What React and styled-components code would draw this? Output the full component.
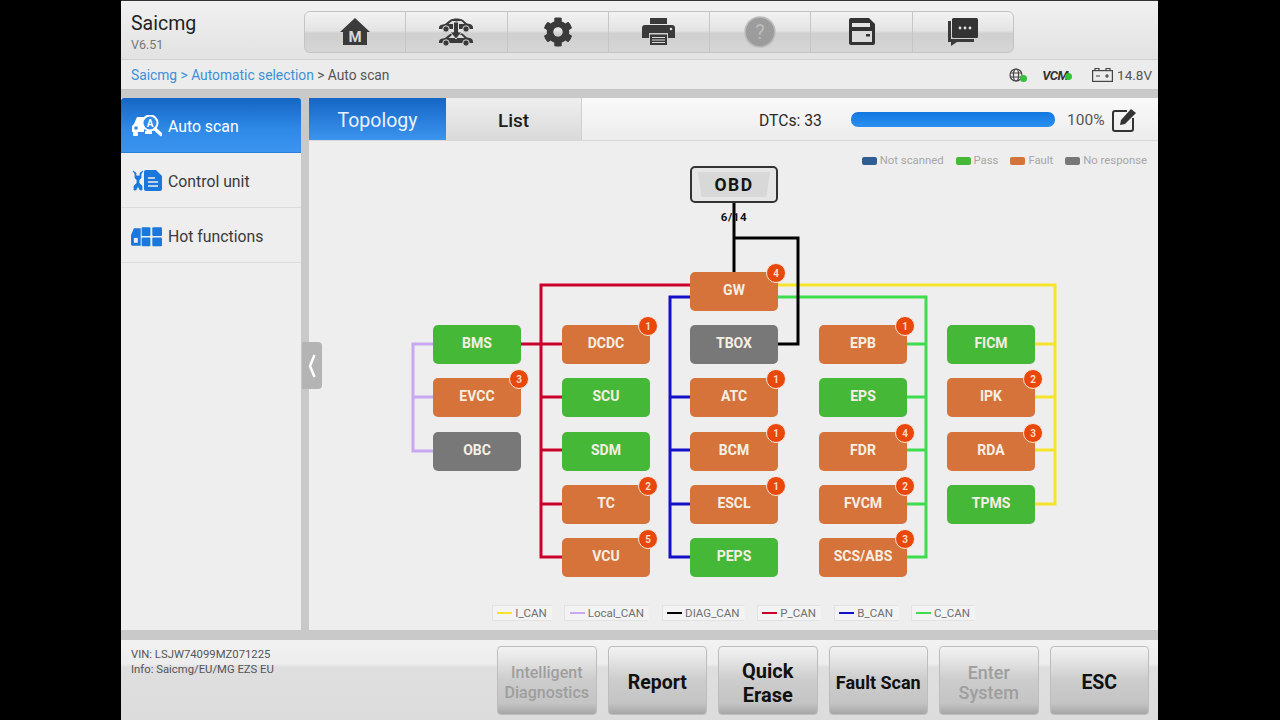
import React from 'react'
import styled, { createGlobalStyle } from 'styled-components'
import { FaCog } from 'react-icons/fa'

const GlobalStyle = createGlobalStyle`
  html, body {
    margin: 0;
    height: 100%;
    background: #000;
    font-family: Roboto, "Liberation Sans", sans-serif;
  }
`

// diagram origin in page coordinates, the data below is read off the screen
const OX = 309
const OY = 166

const nodes = [
  { name: 'GW', x: 690, y: 272, kind: 'fault', count: 4 },
  { name: 'BMS', x: 433, y: 325, kind: 'pass' },
  { name: 'EVCC', x: 433, y: 378, kind: 'fault', count: 3 },
  { name: 'OBC', x: 433, y: 432, kind: 'none' },
  { name: 'DCDC', x: 562, y: 325, kind: 'fault', count: 1 },
  { name: 'SCU', x: 562, y: 378, kind: 'pass' },
  { name: 'SDM', x: 562, y: 432, kind: 'pass' },
  { name: 'TC', x: 562, y: 485, kind: 'fault', count: 2 },
  { name: 'VCU', x: 562, y: 538, kind: 'fault', count: 5 },
  { name: 'TBOX', x: 690, y: 325, kind: 'none' },
  { name: 'ATC', x: 690, y: 378, kind: 'fault', count: 1 },
  { name: 'BCM', x: 690, y: 432, kind: 'fault', count: 1 },
  { name: 'ESCL', x: 690, y: 485, kind: 'fault', count: 1 },
  { name: 'PEPS', x: 690, y: 538, kind: 'pass' },
  { name: 'EPB', x: 819, y: 325, kind: 'fault', count: 1 },
  { name: 'EPS', x: 819, y: 378, kind: 'pass' },
  { name: 'FDR', x: 819, y: 432, kind: 'fault', count: 4 },
  { name: 'FVCM', x: 819, y: 485, kind: 'fault', count: 2 },
  { name: 'SCS/ABS', x: 819, y: 538, kind: 'fault', count: 3 },
  { name: 'FICM', x: 947, y: 325, kind: 'pass' },
  { name: 'IPK', x: 947, y: 378, kind: 'fault', count: 2 },
  { name: 'RDA', x: 947, y: 432, kind: 'fault', count: 3 },
  { name: 'TPMS', x: 947, y: 485, kind: 'pass' },
]

const kindColors = { fault: '#d5733a', pass: '#46b838', none: '#787878' }

const wires = [
  { color: '#c8a8f0', d: 'M433 344H413V451H433M413 397H433' },
  { color: '#c9002b', d: 'M690 285H541V557H562M521 344H562M541 397H562M541 450H562M541 504H562' },
  { color: '#1410c8', d: 'M690 297H670V557H690M670 397H690M670 450H690M670 504H690' },
  { color: '#f5e42a', d: 'M778 285H1055V504H1035M1035 344H1055M1035 397H1055M1035 450H1055' },
  { color: '#3fdc4e', d: 'M778 297H926V557H907M907 344H926M907 397H926M907 450H926M907 504H926' },
  { color: '#000', d: 'M734 203V272M734 238H798V344H778' },
]

const busLegend = [
  { name: 'I_CAN', color: '#f5e42a', w: 60 },
  { name: 'Local_CAN', color: '#c8a8f0', w: 85 },
  { name: 'DIAG_CAN', color: '#000', w: 83 },
  { name: 'P_CAN', color: '#c9002b', w: 64 },
  { name: 'B_CAN', color: '#1410c8', w: 65 },
  { name: 'C_CAN', color: '#3fdc4e', w: 64 },
]

const Screen = styled.div`
  width: 1037px;
  height: 720px;
  margin-left: 121px;
  display: flex;
  flex-direction: column;
  background: #c9c9c9;
  border-top: 1px solid #333;
  box-sizing: border-box;
  overflow: hidden;
`

const TopBar = styled.header`
  height: 59px;
  flex: none;
  display: flex;
  align-items: center;
  padding-left: 10px;
  background: linear-gradient(#f1f1f1, #e2e2e2);
  border-bottom: 1px solid #cfcfcf;
  box-sizing: border-box;
`

const Brand = styled.div`
  width: 173px;
  flex: none;
  padding-top: 4px;
  h1 {
    margin: 0;
    font-size: 19.5px;
    font-weight: 400;
    line-height: 24px;
    color: #1f1f1f;
  }
  small {
    display: block;
    margin-top: 2px;
    font-size: 12.5px;
    line-height: 14px;
    color: #777;
  }
`

const Toolbar = styled.div`
  width: 710px;
  height: 42px;
  margin-top: 3px;
  display: flex;
  border-radius: 6px;
  border: 1px solid #c4c4c4;
  box-sizing: border-box;
  overflow: hidden;
  background: linear-gradient(#f2f2f2 0%, #e4e4e4 46%, #cfcfcf 54%, #d6d6d6 100%);
`

const ToolButton = styled.div`
  flex: 1;
  display: flex;
  align-items: center;
  justify-content: center;
  color: #3a3a3a;
  font-size: 30px;
  & + & {
    border-left: 1px solid #c6c6c6;
  }
`

const CrumbBar = styled.div`
  height: 30px;
  flex: none;
  display: flex;
  align-items: center;
  padding: 1px 6px 0 10px;
  background: #ececec;
  border-bottom: 1px solid #c4c4c4;
  box-sizing: border-box;
  font-size: 13.8px;
  color: #555;
`

const Crumbs = styled.div`
  flex: 1;
  a {
    color: #3c8fd8;
  }
`

const Status = styled.div`
  display: flex;
  align-items: center;
  color: #555;
  font-size: 13.5px;
  svg {
    display: block;
  }
`

const Vcm = styled.span`
  position: relative;
  margin: 0 24px 0 18px;
  font-size: 13px;
  font-weight: 700;
  font-style: italic;
  letter-spacing: -0.5px;
  color: #333;
`

const GreenDot = styled.i`
  position: absolute;
  right: ${p => p.$right}px;
  bottom: ${p => p.$bottom}px;
  width: 7px;
  height: 7px;
  border-radius: 50%;
  background: #36c03c;
`

const Globe = styled.span`
  position: relative;
  display: block;
`

const Voltage = styled.span`
  margin-left: 4px;
`

const Body = styled.main`
  height: 532px;
  margin-top: 8px;
  flex: none;
  display: flex;
  gap: 8px;
  position: relative;
`

const Sidebar = styled.nav`
  width: 180px;
  flex: none;
  background: #eee;
  border-top-right-radius: 3px;
`

const SideItem = styled.div`
  height: 55px;
  display: flex;
  align-items: center;
  gap: 6px;
  padding: 2px 0 0 10px;
  box-sizing: border-box;
  font-size: 15.8px;
  color: ${p => (p.$active ? '#fff' : '#3a3a3a')};
  background: ${p => (p.$active ? 'linear-gradient(#1566c4, #2f8ae8 60%, #3b94ee)' : 'transparent')};
  border-bottom: 1px solid ${p => (p.$active ? '#2a7fd8' : '#dcdcdc')};
  border-radius: ${p => (p.$active ? '3px 3px 0 0' : '0')};
  svg {
    flex: none;
  }
`

const Collapse = styled.div`
  position: absolute;
  left: 181px;
  top: 244px;
  width: 20px;
  height: 47px;
  display: flex;
  align-items: center;
  justify-content: center;
  background: #b4b4b4;
  border-radius: 0 4px 4px 0;
`

const Content = styled.section`
  flex: 1;
  display: flex;
  flex-direction: column;
  background: #eee;
`

const TabBar = styled.div`
  height: 43px;
  flex: none;
  display: flex;
  align-items: center;
  background: linear-gradient(#fafafa, #ececec);
  border-bottom: 1px solid #d8d8d8;
  box-sizing: border-box;
`

const Tab = styled.div`
  width: ${p => (p.$active ? 137 : 136)}px;
  height: 100%;
  padding-top: 3px;
  display: flex;
  align-items: center;
  justify-content: center;
  font-size: ${p => (p.$active ? 19.5 : 19)}px;
  color: ${p => (p.$active ? '#e8f2ff' : '#1c1c1c')};
  font-weight: ${p => (p.$active ? 400 : 500)};
  background: ${p => (p.$active ? 'linear-gradient(#1566c4, #3b94ee)' : 'linear-gradient(#efefef, #dadada)')};
  border-right: ${p => (p.$active ? 'none' : '1px solid #d0d0d0')};
  box-sizing: border-box;
`

const Dtc = styled.div`
  margin: 2px 0 0 177px;
  width: 92px;
  font-size: 15.7px;
  color: #2a2a2a;
`

const Progress = styled.div`
  width: 204px;
  height: 15px;
  margin-top: 1px;
  border-radius: 7px;
  background: linear-gradient(#1278e0, #2a8ff0);
`

const Percent = styled.div`
  margin: 2px 0 0 12px;
  font-size: 15.5px;
  color: #555;
`

const EditIcon = styled.svg`
  margin: 1px 0 0 7px;
  display: block;
`

const Legend = styled.div`
  height: 25px;
  flex: none;
  display: flex;
  justify-content: flex-end;
  align-items: flex-end;
  gap: 12px;
  padding-right: 11px;
  font-size: 11.3px;
  line-height: 11px;
  color: #a6a6a6;
  span {
    display: flex;
    align-items: center;
    gap: 3px;
  }
`

const Swatch = styled.i`
  width: 15px;
  height: 8px;
  border-radius: 2px;
  background: ${p => p.$color};
`

const Diagram = styled.div`
  position: relative;
  height: 438px;
  flex: none;
`

const Wires = styled.svg`
  position: absolute;
  inset: 0;
  width: 100%;
  height: 100%;
`

const Node = styled.div`
  position: absolute;
  left: ${p => p.$x - OX}px;
  top: ${p => p.$y - OY}px;
  width: 88px;
  height: 38.5px;
  display: flex;
  align-items: center;
  justify-content: center;
  box-sizing: border-box;
  padding-bottom: 2px;
  border-radius: 5px;
  font-size: 14px;
  font-weight: 700;
  color: #f6efe4;
  background: ${p => kindColors[p.$kind]};
`

const Badge = styled.b`
  position: absolute;
  right: -8px;
  top: -9px;
  width: 18px;
  height: 18px;
  display: flex;
  align-items: center;
  justify-content: center;
  border-radius: 50%;
  border: 1.5px solid #f6e6da;
  background: #e8480c;
  font-size: 10px;
  font-weight: 700;
  color: #f8dcc8;
`

const Obd = styled.div`
  position: absolute;
  left: ${690 - OX}px;
  top: 0;
  width: 88px;
  height: 37px;
  padding: 4px 6px;
  display: flex;
  border: 2px solid #333;
  border-radius: 5px;
  background: #e6e6e6;
  box-sizing: border-box;
`

const ObdPlug = styled.div`
  flex: 1;
  display: flex;
  align-items: center;
  justify-content: center;
  clip-path: polygon(0 0, 100% 0, 95% 100%, 5% 100%);
  background: #d8d8d8;
  font-size: 17.5px;
  font-weight: 700;
  letter-spacing: 1.5px;
  color: #141414;
`

const Pin = styled.div`
  position: absolute;
  left: ${690 - OX}px;
  top: 44px;
  width: 88px;
  text-align: center;
  font-size: 11.5px;
  line-height: 14px;
  font-weight: 700;
  letter-spacing: 0.6px;
  color: #111;
`

const BusRow = styled.div`
  display: flex;
  justify-content: center;
  gap: 12.4px;
  margin-top: 1px;
`

const Bus = styled.div`
  width: ${p => p.$w}px;
  height: 16px;
  display: flex;
  align-items: center;
  justify-content: center;
  gap: 3px;
  font-size: 11.5px;
  color: #707070;
  background: #f3f3f3;
  border: 1px solid #e2e2e2;
  border-right-color: transparent;
  box-sizing: border-box;
`

const BusLine = styled.i`
  width: 15px;
  height: 2px;
  background: ${p => p.$color};
`

const Footer = styled.footer`
  height: 80px;
  margin-top: 10px;
  flex: none;
  display: flex;
  padding: 6px 9px 5px 10px;
  box-sizing: border-box;
  background: linear-gradient(#f2f2f2 0%, #ededed 30%, #dfdfdf 34%, #dcdcdc 100%);
`

const CarInfo = styled.div`
  flex: 1;
  padding-top: 1px;
  font-size: 11.3px;
  line-height: 15px;
  color: #555;
`

const Actions = styled.div`
  display: flex;
  gap: 11px;
`

const ActionButton = styled.button`
  width: 99.5px;
  height: 69px;
  padding: 5px 4px 0;
  border: 1px solid #bdbdbd;
  border-radius: 4px;
  font-family: inherit;
  font-size: ${p => p.$size || 18}px;
  line-height: ${p => (p.$size > 19.5 ? 24 : 20)}px;
  font-weight: ${p => (p.$off ? 500 : 700)};
  color: ${p => (p.$off ? '#9e9e9e' : '#111')};
  background: linear-gradient(#f2f2f2 0%, #e6e6e6 18%, #cdcdcd 48%, #c4c4c4 84%, #a6a6a6 100%);
`

function HomeIcon() {
  return (
    <svg width="32" height="28" viewBox="0 0 32 28">
      <path d="M16 0 L31 14 H28 V27 H4 V14 H1Z" fill="#3a3a3a" />
      <text x="16" y="24" textAnchor="middle" fontSize="15" fontWeight="700" fill="#d8d8d8" fontFamily="Roboto">M</text>
    </svg>
  )
}

function Sedan({ y }) {
  return (
    <g transform={`translate(0 ${y})`}>
      <path d="M1 11C1 8 4 7.500 7 7L12 3C15 1 22 1 25 3L29 6.500C33 7 35 8 35 11L35 12H1z" fill="#3a3a3a" />
      <path d="M10.500 7L14 4H17.500V7zM19.500 4H23.500L26.500 7H19.500z" fill="#dedede" />
      <circle cx="8" cy="12" r="3.200" fill="#3a3a3a" stroke="#dedede" />
      <circle cx="28" cy="12" r="3.200" fill="#3a3a3a" stroke="#dedede" />
    </g>
  )
}

function CarSwapIcon() {
  return (
    <svg width="36" height="30" viewBox="0 0 36 30">
      <Sedan y={0} />
      <Sedan y={14} />
      <path d="M15.500 5h5v10h3.500l-6 7-6-7h3.500z" fill="#3a3a3a" stroke="#dedede" strokeWidth="1" />
    </svg>
  )
}

function PrintIcon() {
  return (
    <svg width="33" height="27" viewBox="0 0 33 27">
      <rect x="8" y="0" width="17" height="6" fill="#3a3a3a" />
      <path d="M3 7H30a3 3 0 0 1 3 3V20H26V15H7V20H0V10a3 3 0 0 1 3-3z" fill="#3a3a3a" />
      <circle cx="29" cy="11" r="1.300" fill="#dedede" />
      <rect x="8" y="16.500" width="17" height="10.500" fill="#3a3a3a" />
      <path d="M10 19.500H23M10 22H23M10 24.500H23" stroke="#d8d8d8" strokeWidth="1" />
    </svg>
  )
}

function HelpIcon() {
  return (
    <svg width="32" height="32" viewBox="0 0 32 32">
      <circle cx="16" cy="16" r="15" fill="#9c9c9c" stroke="#bdbdbd" strokeWidth="1.500" />
      <text x="16" y="23" textAnchor="middle" fontSize="20" fill="#bcbcbc" fontFamily="Roboto">?</text>
    </svg>
  )
}

function SaveIcon() {
  return (
    <svg width="26" height="27" viewBox="0 0 26 27">
      <path d="M2 0H20L26 6V25a2 2 0 0 1-2 2H2a2 2 0 0 1-2-2V2a2 2 0 0 1 2-2z" fill="#333" />
      <rect x="3" y="5" width="18" height="4" fill="#e4e4e4" />
      <rect x="3" y="13" width="20" height="11" fill="#dcdcdc" />
      <rect x="17" y="16" width="4" height="2.500" fill="#333" />
    </svg>
  )
}

function ChatIcon() {
  return (
    <svg width="30" height="28" viewBox="0 0 30 28">
      <path d="M0 3H3V21H26V24H9L3 28V24H0z" fill="#3a3a3a" />
      <rect x="4" y="0" width="26" height="20" rx="1.500" fill="#333" />
      <circle cx="12" cy="10" r="1.400" fill="#e4e4e4" />
      <circle cx="17" cy="10" r="1.400" fill="#e4e4e4" />
      <circle cx="22" cy="10" r="1.400" fill="#e4e4e4" />
    </svg>
  )
}

function GlobeIcon() {
  return (
    <svg width="15" height="14" viewBox="0 0 15 14" fill="none" stroke="#444" strokeWidth="1.200">
      <circle cx="7" cy="7" r="6" />
      <ellipse cx="7" cy="7" rx="2.600" ry="6" />
      <path d="M1 5H13M1 9H13" />
    </svg>
  )
}

function BatteryIcon() {
  return (
    <svg width="21" height="14" viewBox="0 0 21 14" fill="none" stroke="#444" strokeWidth="1.200">
      <rect x="0.600" y="2.600" width="19.800" height="10.800" />
      <path d="M3 2.500V0.500H7V2.500M14 2.500V0.500H18V2.500M4 8H8M13 8H17M15 6V10" />
    </svg>
  )
}

function AutoScanIcon() {
  return (
    <svg width="31" height="22" viewBox="0 0 31 22">
      <path d="M1 19V11L3 9L6 2H17V8L13 11V17H1z" fill="#fff" />
      <circle cx="5" cy="13" r="1.800" fill="#2f8ae8" />
      <rect x="2" y="17" width="5" height="4" rx="1" fill="#fff" />
      <rect x="14" y="16" width="7" height="3" fill="#fff" />
      <circle cx="19" cy="8" r="7.500" fill="#2f8ae8" stroke="#fff" strokeWidth="2" />
      <text x="19" y="12" textAnchor="middle" fontSize="10" fontWeight="700" fill="#fff" fontFamily="Roboto">A</text>
      <path d="M24 14L30 19.500" stroke="#fff" strokeWidth="3.500" strokeLinecap="round" />
    </svg>
  )
}

function ControlUnitIcon() {
  return (
    <svg width="31" height="22" viewBox="0 0 31 22">
      <path d="M2 1L4 4V8L6 10V13L3 16V20H5L7 16L9 20H11V16L8 13V10L10 8V4L12 1L9 3V6H5V3z" fill="#1a78dc" stroke="#1a78dc" strokeWidth="0.800" />
      <path d="M13 2a2 2 0 0 1 2-2H25L31 6V19a2 2 0 0 1-2 2H15a2 2 0 0 1-2-2z" fill="#1a78dc" />
      <path d="M17 8H24M17 12H27M17 16H27" stroke="#eee" strokeWidth="1.600" />
    </svg>
  )
}

function HotFunctionsIcon() {
  return (
    <svg width="31" height="21" viewBox="0 0 32 21" fill="#1a78dc">
      <path d="M0 19V9L3 2H10V8H10V20H1z" />
      <rect x="3" y="12" width="4" height="5" fill="#eee" />
      <rect x="11" y="1" width="9" height="9" rx="1" />
      <rect x="22" y="1" width="10" height="9" rx="1" />
      <rect x="11" y="11.500" width="9" height="9" rx="1" />
      <rect x="22" y="11.500" width="10" height="9" rx="1" />
    </svg>
  )
}

function App() {
  return (
    <Screen>
      <GlobalStyle />
      <TopBar>
        <Brand>
          <h1>Saicmg</h1>
          <small>V6.51</small>
        </Brand>
        <Toolbar>
          <ToolButton><HomeIcon /></ToolButton>
          <ToolButton><CarSwapIcon /></ToolButton>
          <ToolButton><FaCog /></ToolButton>
          <ToolButton><PrintIcon /></ToolButton>
          <ToolButton><HelpIcon /></ToolButton>
          <ToolButton><SaveIcon /></ToolButton>
          <ToolButton><ChatIcon /></ToolButton>
        </Toolbar>
      </TopBar>

      <CrumbBar>
        <Crumbs>
          <a>Saicmg &gt; Automatic selection</a> &gt; Auto scan
        </Crumbs>
        <Status>
          <Globe>
            <GlobeIcon />
            <GreenDot $right={-3} $bottom={0} />
          </Globe>
          <Vcm>
            VCM
            <GreenDot $right={-4} $bottom={3} />
          </Vcm>
          <BatteryIcon />
          <Voltage>14.8V</Voltage>
        </Status>
      </CrumbBar>

      <Body>
        <Sidebar>
          <SideItem $active>
            <AutoScanIcon />
            Auto scan
          </SideItem>
          <SideItem>
            <ControlUnitIcon />
            Control unit
          </SideItem>
          <SideItem>
            <HotFunctionsIcon />
            Hot functions
          </SideItem>
        </Sidebar>
        <Collapse>
          <svg width="8" height="24" viewBox="0 0 8 24" fill="none" stroke="#fff" strokeWidth="2.500">
            <path d="M6.500 1L2 12L6.500 23" />
          </svg>
        </Collapse>

        <Content>
          <TabBar>
            <Tab $active>Topology</Tab>
            <Tab>List</Tab>
            <Dtc>DTCs: 33</Dtc>
            <Progress />
            <Percent>100%</Percent>
            <EditIcon width="24" height="24" viewBox="0 0 24 24">
              <path d="M15 3H3a2 2 0 0 0-2 2V21a2 2 0 0 0 2 2H19a2 2 0 0 0 2-2V10" fill="none" stroke="#333" strokeWidth="2" />
              <path d="M8 17L9 12L19 1L24 5L13 16z" fill="#333" />
            </EditIcon>
          </TabBar>

          <Legend>
            <span><Swatch $color="#2f5d94" />Not scanned</span>
            <span><Swatch $color="#46b838" />Pass</span>
            <span><Swatch $color="#d5733a" />Fault</span>
            <span><Swatch $color="#787878" />No response</span>
          </Legend>

          <Diagram>
            <Wires viewBox={`${OX} ${OY} 849 438`}>
              <g fill="none" strokeWidth="3">
                {wires.map(w => <path key={w.color} d={w.d} stroke={w.color} />)}
              </g>
            </Wires>
            <Obd><ObdPlug>OBD</ObdPlug></Obd>
            <Pin>6/14</Pin>
            {nodes.map(n => (
              <Node key={n.name} $x={n.x} $y={n.y} $kind={n.kind}>
                {n.name}
                {n.count && <Badge>{n.count}</Badge>}
              </Node>
            ))}
          </Diagram>

          <BusRow>
            {busLegend.map(b => (
              <Bus key={b.name} $w={b.w}>
                <BusLine $color={b.color} />
                {b.name}
              </Bus>
            ))}
          </BusRow>
        </Content>
      </Body>

      <Footer>
        <CarInfo>
          VIN: LSJW74099MZ071225
          <br />
          Info: Saicmg/EU/MG EZS EU
        </CarInfo>
        <Actions>
          <ActionButton $off $size={16}>Intelligent Diagnostics</ActionButton>
          <ActionButton $size={19.5}>Report</ActionButton>
          <ActionButton $size={20}>Quick Erase</ActionButton>
          <ActionButton $size={18}>Fault Scan</ActionButton>
          <ActionButton $off $size={18}>Enter System</ActionButton>
          <ActionButton $size={19.5}>ESC</ActionButton>
        </Actions>
      </Footer>
    </Screen>
  )
}

export default App
